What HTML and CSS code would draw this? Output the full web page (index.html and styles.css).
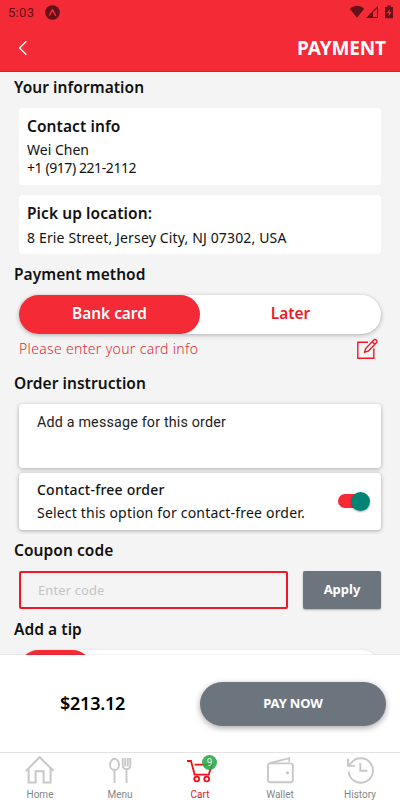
FILE: index.html
```html
<!DOCTYPE html>
<html lang="en">
<head>
    <meta charset="UTF-8">
    <meta name="viewport" content="width=device-width, initial-scale=1.0">
    <title>Payment</title>
    <link rel="stylesheet" href="styles.css">
</head>
<body>
    <header class="header">
        <!-- Status bar -->
        <div class="status">
            <span class="clock">5:03</span>
            <svg class="expo" width="15" height="15" viewBox="0 0 15 15">
                <circle cx="7.5" cy="7.5" r="7.3" fill="#651119"/>
                <path d="M4.6 10.2 7.5 4.7 10.4 10.2" fill="none" stroke="#f42a37" stroke-width="1.5" stroke-linecap="round" stroke-linejoin="round"/>
            </svg>
            <svg class="signals" width="44" height="14" viewBox="0 0 44 14">
                <path d="M.8 3.8C4.8-.4 11.2-.4 15.2 3.8L8 12.8Z" fill="#651119"/>
                <path d="M29 .8V13H17Z" fill="#651119"/>
                <path d="M24 7.2 28 3.2V12H24Z" fill="#f42a37"/>
                <path d="M36 2h2.3V.4h3.4V2H44v11.2h-8Z" fill="#651119"/>
                <path d="M40.6 4 37.8 8.2h1.9V11.4L42.4 7h-1.8Z" fill="#f42a37"/>
            </svg>
        </div>
        <div class="title-bar">
            <svg width="10" height="16" viewBox="0 0 10 16">
                <path d="M8.4 1.3 1.6 8l6.8 6.7" fill="none" stroke="#fff" stroke-width="1.4"/>
            </svg>
            <h1 class="title">PAYMENT</h1>
        </div>
    </header>

    <main class="content">
        <h2 class="heading info-heading">Your information</h2>
        <section class="card contact">
            <h3 class="card-title">Contact info</h3>
            <p class="name">Wei Chen</p>
            <p class="phone">+1 (917) 221-2112</p>
        </section>
        <section class="card pickup">
            <h3 class="card-title">Pick up location:</h3>
            <p class="address">8 Erie Street, Jersey City, NJ 07302, USA</p>
        </section>

        <h2 class="heading">Payment method</h2>
        <div class="methods">
            <button class="method active">Bank card</button>
            <button class="method later">Later</button>
        </div>
        <div class="card-info">
            <span class="card-text">Please enter your card info</span>
            <svg width="22" height="22" viewBox="0 0 22 22" fill="none" stroke="#f01824" stroke-width="1.4">
                <path d="M12 4.2H1.8v16h16V10.5"/>
                <path d="M8.6 14.2 9.6 10.6 17.6 2.2Q18.8.9 20.2 2t.1 2.7L12.2 13.2Z"/>
                <path d="M16.2 3.8 18.8 6.2"/>
            </svg>
        </div>

        <h2 class="heading">Order instruction</h2>
        <div class="message">Add a message for this order</div>
        <div class="contact-free">
            <div>
                <p class="free-title">Contact-free order</p>
                <p class="free-text">Select this option for contact-free order.</p>
            </div>
            <span class="switch"><span class="knob"></span></span>
        </div>

        <h2 class="heading">Coupon code</h2>
        <div class="coupon">
            <input class="code" type="text" placeholder="Enter code">
            <button class="apply">Apply</button>
        </div>

        <h2 class="heading">Add a tip</h2>
        <div class="tips"><span class="tip"></span></div>
    </main>

    <div class="checkout">
        <span class="total">$213.12</span>
        <button class="pay">PAY NOW</button>
    </div>

    <nav class="tabs">
        <a class="tab">
            <svg width="30" height="30" viewBox="0 0 30 30" fill="none" stroke="#c8c8c8" stroke-width="2">
                <path d="M.8 16 14.7 2.2 28.6 16M3.6 13.6V27.4h7V16.3h8V27.4h7V13.6"/>
            </svg>
            Home
        </a>
        <a class="tab">
            <svg width="30" height="30" viewBox="0 0 30 30" fill="none" stroke="#c8c8c8" stroke-width="1.9">
                <path d="M9.5 3.8C12.6 3.8 14 7.4 14 10S12.2 15 9.5 15 5 12.6 5 10 6.4 3.8 9.5 3.8Z"/>
                <path d="M9.5 15V28M21.5 14.5V28M17.7 3V10.6Q17.7 14.2 21.5 14.2T25.3 10.6V3M20.2 3V11.5M22.8 3V11.5"/>
            </svg>
            Menu
        </a>
        <a class="tab current">
            <svg width="30" height="30" viewBox="0 0 30 30" fill="none" stroke="#f20d18" stroke-width="1.8">
                <path d="M2 6H6L9.6 19.6H23.8L26.8 9.6H9.6"/>
                <circle cx="11.7" cy="24" r="2.4"/>
                <circle cx="21.7" cy="24" r="2.4"/>
            </svg>
            <span class="badge">9</span>
            Cart
        </a>
        <a class="tab">
            <svg width="30" height="30" viewBox="0 0 30 30" fill="none" stroke="#c8c8c8" stroke-width="1.9">
                <rect x="3" y="8.4" width="24.8" height="18.8" rx="2.2"/>
                <path d="M4.6 8.2 24.2 3.2V6.8"/>
                <circle cx="22.5" cy="17.8" r="1.6" fill="#c8c8c8" stroke="none"/>
            </svg>
            Wallet
        </a>
        <a class="tab">
            <svg width="30" height="30" viewBox="0 0 30 30" fill="none" stroke="#c8c8c8" stroke-width="1.9">
                <path d="M3.6 16.5A12.2 12.2 0 1 0 6 8.2L3.3 10.6M3 3.8V10.9H10M15.3 8V15.8H22.3"/>
            </svg>
            History
        </a>
    </nav>
</body>
</html>
```
FILE: styles.css
```css
* {
    box-sizing: border-box;
}
body {
    margin: 0;
    height: 800px;
    display: flex;
    flex-direction: column;
    overflow: hidden;
    background: #f4f4f4;
    color: #111;
    font-family: "Noto Sans", sans-serif;
    font-size: 14px;
    white-space: nowrap;
}
h1, h2, h3, p {
    margin: 0;
}
button {
    border: 0;
    padding: 0 0 2px;
    font-family: inherit;
    color: #fff;
}
svg {
    display: block;
    flex: none;
}

/* Header */
.header {
    height: 72px;
    background: #f42a37;
    border-bottom: 1px solid #ee1420;
}
.status {
    height: 24px;
    padding: 0 7px 0 8px;
    display: flex;
    align-items: center;
}
.clock {
    font: 13px Roboto, sans-serif;
    color: #651119;
    width: 37px;
    letter-spacing: 0.3px;
}
.signals {
    margin-left: auto;
}
.title-bar {
    height: 47px;
    padding: 0 14px 0 18px;
    display: flex;
    align-items: center;
    justify-content: space-between;
}
.title {
    font-size: 19px;
    font-weight: 700;
    line-height: 24px;
    letter-spacing: -0.1px;
    color: #fff;
}

/* Content */
.content {
    height: 583px;
    overflow: hidden;
    display: flow-root;
}
.heading {
    margin: 10px 14px 11px;
    font-size: 15.5px;
    font-weight: 600;
    line-height: 20px;
    letter-spacing: 0.06px;
}
.info-heading {
    margin-top: 5px;
}
.card {
    margin: 0 19px 10px;
    padding: 8px;
    background: #fff;
    border-radius: 4px;
}
.contact {
    height: 77px;
}
.pickup {
    height: 59px;
}
.card-title {
    font-size: 15.5px;
    font-weight: 600;
    line-height: 20px;
    letter-spacing: 0.08px;
}
.name {
    margin-top: 5px;
    line-height: 18px;
}
.phone {
    line-height: 18px;
    letter-spacing: -0.42px;
}
.address {
    margin-top: 6px;
    line-height: 18px;
    letter-spacing: 0.15px;
}
.methods {
    height: 39px;
    margin: 0 19px;
    display: flex;
    background: #fff;
    border-radius: 20px;
    box-shadow: 0 1px 4px rgba(0, 0, 0, 0.3);
}
.method {
    flex: 1;
    border-radius: 20px;
    background: none;
    font-size: 15.4px;
    font-weight: 600;
}
.active {
    background: #f42a37;
}
.later {
    color: #f01824;
}
.card-info {
    height: 29px;
    margin: 0 22px 0 19px;
    display: flex;
    align-items: center;
    justify-content: space-between;
    color: #e32a35;
}
.card-text {
    font-weight: 300;
    letter-spacing: 0.33px;
}
.message {
    height: 64px;
    margin: 0 19px 5px;
    padding: 9px 18px;
    border-radius: 4px;
    background: #fff;
    box-shadow: 0 1px 4px rgba(0, 0, 0, 0.3);
    font-family: Roboto, sans-serif;
    font-size: 14.3px;
    line-height: 18px;
    letter-spacing: 0.18px;
    color: #222;
}
.contact-free {
    height: 57px;
    margin: 0 19px;
    padding: 0 11px 1px 18px;
    display: flex;
    align-items: center;
    justify-content: space-between;
    border-radius: 4px;
    background: #fff;
    box-shadow: 0 1px 4px rgba(0, 0, 0, 0.3);
}
.free-title {
    font-weight: 500;
    line-height: 23px;
    letter-spacing: 0.23px;
}
.free-text {
    line-height: 23px;
    letter-spacing: 0.19px;
}
.switch {
    width: 32px;
    height: 14px;
    display: flex;
    align-items: center;
    justify-content: flex-end;
    background: linear-gradient(#f42a37, #f42a37) 0 0 / 26px 14px no-repeat;
    border-radius: 7px;
}
.knob {
    width: 19px;
    height: 19px;
    flex: none;
    border-radius: 50%;
    background: #048475;
    box-shadow: 0 1px 2px rgba(0, 0, 0, 0.35);
}
.coupon {
    height: 38px;
    margin: 0 19px;
    display: flex;
    gap: 15px;
}
.code {
    width: 269px;
    padding: 0 17px 1px;
    border: 2px solid #f01824;
    border-radius: 2px;
    background: none;
    font: 13px "Noto Sans", sans-serif;
    letter-spacing: 0.1px;
}
.code::placeholder {
    color: #c4c4c4;
}
.apply {
    flex: 1;
    border-radius: 2px;
    background: #6c757e;
    box-shadow: 0 1px 2px rgba(0, 0, 0, 0.3);
    font-size: 13px;
    font-weight: 700;
}
.tips {
    height: 39px;
    margin: 0 19px;
    border-radius: 20px;
    background: #fff;
    box-shadow: 0 0 2px rgba(0, 0, 0, 0.12);
}
.tip {
    display: block;
    width: 73px;
    height: 39px;
    border-radius: 20px;
    background: #f42a37;
}

/* Total and pay button */
.checkout {
    height: 97px;
    padding: 0 14px;
    display: flex;
    align-items: center;
    background: #fff;
    box-shadow: 0 0 1px rgba(0, 0, 0, 0.3);
    z-index: 1;
}
.total {
    width: 186px;
    padding: 0 0 2px 46px;
    font-size: 18px;
    font-weight: 600;
    letter-spacing: -0.25px;
    color: #000;
}
.pay {
    flex: 1;
    height: 44px;
    border-radius: 22px;
    background: #6c757e;
    box-shadow: 0 2px 6px rgba(0, 0, 0, 0.35);
    font-size: 13px;
    font-weight: 700;
    letter-spacing: -0.15px;
}

/* Bottom tabs */
.tabs {
    height: 48px;
    display: flex;
    background: #fff;
    border-top: 1px solid #e2e2e2;
    z-index: 2;
}
.tab {
    flex: 1;
    position: relative;
    display: flex;
    flex-direction: column;
    align-items: center;
    padding-top: 2px;
    font: 10px/19px Roboto, sans-serif;
    color: #858585;
}
.current {
    color: #e7141f;
}
.badge {
    position: absolute;
    top: 2px;
    left: 42px;
    width: 15px;
    height: 15px;
    border-radius: 50%;
    background: rgba(39, 168, 72, 0.88);
    color: #d9f2df;
    font-size: 10px;
    line-height: 15px;
    text-align: center;
}
```
